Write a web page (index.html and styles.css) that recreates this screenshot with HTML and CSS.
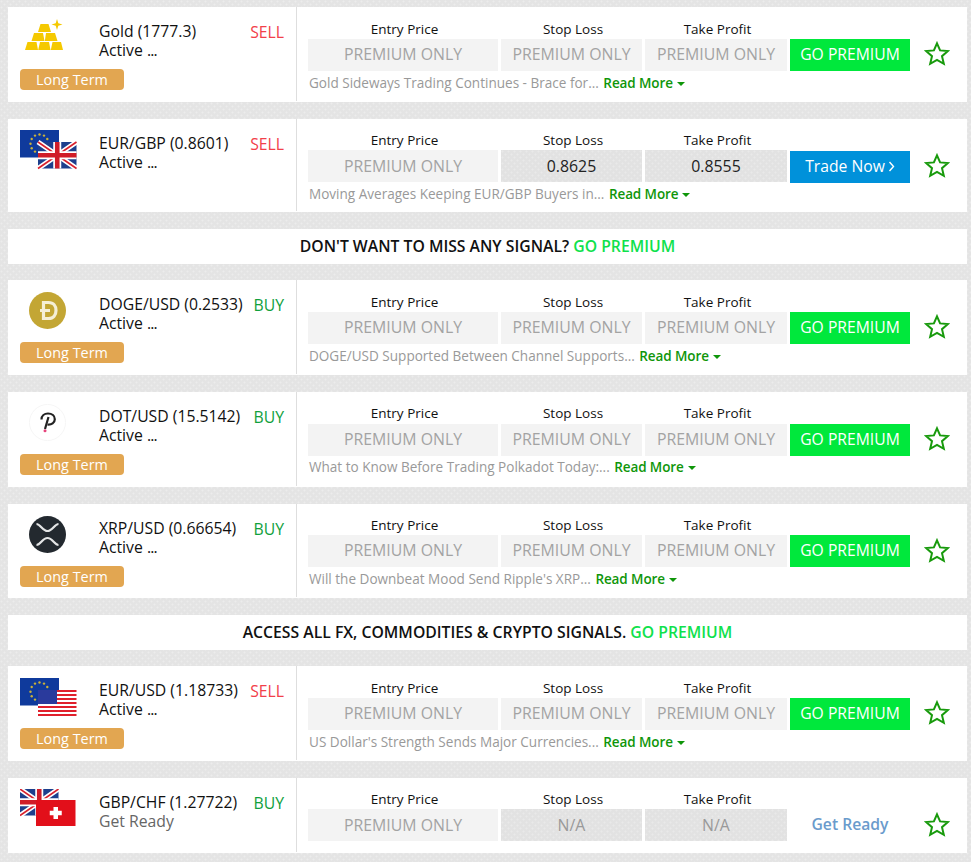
FILE: index.html
```html
<!DOCTYPE html>
<html lang="en">
<head>
<meta charset="utf-8">
<title>Signals</title>
<link rel="stylesheet" href="styles.css">
</head>
<body>
<svg class="defs" width="0" height="0" aria-hidden="true">
  <defs>
    <g id="eu">
      <rect width="39" height="27.5" fill="#0f3a9c"/>
      <g fill="#c9b13a">
        <circle cx="19.5" cy="4.5" r="1.2"/><circle cx="24" cy="5.6" r="1.2"/><circle cx="27.3" cy="9" r="1.2"/><circle cx="28.5" cy="13.7" r="1.2"/><circle cx="27.3" cy="18.2" r="1.2"/><circle cx="24" cy="21.6" r="1.2"/><circle cx="19.5" cy="22.8" r="1.2"/><circle cx="15" cy="21.6" r="1.2"/><circle cx="11.7" cy="18.2" r="1.2"/><circle cx="10.5" cy="13.7" r="1.2"/><circle cx="11.7" cy="9" r="1.2"/><circle cx="15" cy="5.6" r="1.2"/>
      </g>
    </g>
    <g id="uk">
      <rect width="38.5" height="26.5" fill="#1d3f8c"/>
      <path d="M0 0L38.5 26.5M38.5 0L0 26.5" stroke="#fff" stroke-width="5"/>
      <path d="M0 0L38.5 26.5M38.5 0L0 26.5" stroke="#d8202c" stroke-width="1.6"/>
      <path d="M19.25 0V26.5M0 13.25H38.5" stroke="#fff" stroke-width="8"/>
      <path d="M19.25 0V26.5M0 13.25H38.5" stroke="#d01c28" stroke-width="4.6"/>
    </g>
    <symbol id="star" viewBox="0 0 26 25">
      <path d="M13 2.3L16.1 9.4L23.9 10.1L18 15.2L19.8 22.8L13 18.8L6.2 22.8L8 15.2L2.1 10.1L9.9 9.4Z" fill="#fff" stroke="#189a0c" stroke-width="2" stroke-linejoin="miter"/>
    </symbol>
  </defs>
</svg>

<main class="list">

  <article class="row row-lt">
    <div class="left">
      <div class="left-top">
        <div class="logo">
          <svg class="gold" width="39" height="32" viewBox="0 0 39 32">
            <path d="M32 0L33.300 4.200L37.500 5.500L33.300 6.800L32 11L30.700 6.800L26.500 5.500L30.700 4.200Z" fill="#f5c900"/>
            <g fill="#f5c900">
              <path d="M15.500 5H23.500L26 13H13Z"/>
              <path d="M9 14H18L19.500 22H6.500Z"/>
              <path d="M21 14H30L32.500 22H19.800Z"/>
              <path d="M2.500 23H11.500L13 31H0Z"/>
              <path d="M15 23H24L25.500 31H13.200Z"/>
              <path d="M27.500 23H36L38 31H25.800Z"/>
            </g>
          </svg>
        </div>
        <div class="info"><div class="name">Gold (1777.3)</div><div class="status">Active <span class="dots">...</span></div></div>
        <div class="signal sell">SELL</div>
      </div>
      <div class="badge">Long Term</div>
    </div>
    <div class="main">
      <div class="cells">
        <div class="cell cell-entry"><div class="label">Entry Price</div><div class="val val-locked">PREMIUM ONLY</div></div>
        <div class="cell cell-sl"><div class="label">Stop Loss</div><div class="val val-locked">PREMIUM ONLY</div></div>
        <div class="cell cell-tp"><div class="label">Take Profit</div><div class="val val-locked">PREMIUM ONLY</div></div>
        <a class="btn btn-premium">GO PREMIUM</a>
      </div>
      <p class="news">Gold Sideways Trading Continues - Brace for... <a class="more">Read More<i class="caret"></i></a></p>
    </div>
    <svg class="star"><use href="#star"/></svg>
  </article>

  <article class="row row-plain">
    <div class="left">
      <div class="left-top">
        <div class="logo">
          <svg class="flags" width="57" height="40" viewBox="0 0 57 40"><use href="#eu"/><use href="#uk" x="18" y="12"/></svg>
        </div>
        <div class="info"><div class="name">EUR/GBP (0.8601)</div><div class="status">Active <span class="dots">...</span></div></div>
        <div class="signal sell">SELL</div>
      </div>
    </div>
    <div class="main">
      <div class="cells">
        <div class="cell cell-entry"><div class="label">Entry Price</div><div class="val val-locked">PREMIUM ONLY</div></div>
        <div class="cell cell-sl"><div class="label">Stop Loss</div><div class="val val-open">0.8625</div></div>
        <div class="cell cell-tp"><div class="label">Take Profit</div><div class="val val-open">0.8555</div></div>
        <a class="btn btn-trade">Trade Now<svg class="chev" width="7" height="11" viewBox="0 0 7 11"><path d="M1.500 1L5.500 5.500L1.500 10" fill="none" stroke="#fff" stroke-width="1.400"/></svg></a>
      </div>
      <p class="news">Moving Averages Keeping EUR/GBP Buyers in... <a class="more">Read More<i class="caret"></i></a></p>
    </div>
    <svg class="star"><use href="#star"/></svg>
  </article>

  <div class="banner">DON'T WANT TO MISS ANY SIGNAL? <a class="banner-link">GO PREMIUM</a></div>

  <article class="row row-lt">
    <div class="left">
      <div class="left-top">
        <div class="logo">
          <svg class="coin" width="37" height="37" viewBox="0 0 37 37">
            <circle cx="18.500" cy="18.500" r="18.500" fill="#c3a634"/>
            <path d="M14.500 10.500H19.500C24.500 10.500 27 14 27 18.500C27 23 24.500 26.500 19.500 26.500H14.500ZM11 18.500H21" fill="none" stroke="#f5efd6" stroke-width="3.200"/>
          </svg>
        </div>
        <div class="info"><div class="name">DOGE/USD (0.2533)</div><div class="status">Active <span class="dots">...</span></div></div>
        <div class="signal buy">BUY</div>
      </div>
      <div class="badge">Long Term</div>
    </div>
    <div class="main">
      <div class="cells">
        <div class="cell cell-entry"><div class="label">Entry Price</div><div class="val val-locked">PREMIUM ONLY</div></div>
        <div class="cell cell-sl"><div class="label">Stop Loss</div><div class="val val-locked">PREMIUM ONLY</div></div>
        <div class="cell cell-tp"><div class="label">Take Profit</div><div class="val val-locked">PREMIUM ONLY</div></div>
        <a class="btn btn-premium">GO PREMIUM</a>
      </div>
      <p class="news">DOGE/USD Supported Between Channel Supports... <a class="more">Read More<i class="caret"></i></a></p>
    </div>
    <svg class="star"><use href="#star"/></svg>
  </article>

  <article class="row row-lt">
    <div class="left">
      <div class="left-top">
        <div class="logo">
          <svg class="coin" width="37" height="37" viewBox="0 0 37 37">
            <circle cx="18.500" cy="18.500" r="18" fill="#fff" stroke="#f6f6f6"/>
            <path d="M19.500 13L16 25" fill="none" stroke="#222" stroke-width="2.200"/>
            <path d="M12.500 15.500C12.500 11.500 15.500 9.500 19 9.500C23 9.500 25.800 11.800 25.800 15.200C25.800 18.800 22.500 21 18.500 20.500" fill="none" stroke="#222" stroke-width="2.200"/>
            <circle cx="16" cy="26.800" r="1.500" fill="#e6447c"/>
          </svg>
        </div>
        <div class="info"><div class="name">DOT/USD (15.5142)</div><div class="status">Active <span class="dots">...</span></div></div>
        <div class="signal buy">BUY</div>
      </div>
      <div class="badge">Long Term</div>
    </div>
    <div class="main">
      <div class="cells">
        <div class="cell cell-entry"><div class="label">Entry Price</div><div class="val val-locked">PREMIUM ONLY</div></div>
        <div class="cell cell-sl"><div class="label">Stop Loss</div><div class="val val-locked">PREMIUM ONLY</div></div>
        <div class="cell cell-tp"><div class="label">Take Profit</div><div class="val val-locked">PREMIUM ONLY</div></div>
        <a class="btn btn-premium">GO PREMIUM</a>
      </div>
      <p class="news">What to Know Before Trading Polkadot Today:... <a class="more">Read More<i class="caret"></i></a></p>
    </div>
    <svg class="star"><use href="#star"/></svg>
  </article>

  <article class="row row-lt">
    <div class="left">
      <div class="left-top">
        <div class="logo">
          <svg class="coin" width="37" height="37" viewBox="0 0 37 37">
            <circle cx="18.500" cy="18.500" r="18.500" fill="#23292f"/>
            <path d="M7.500 8C11.500 8 13.500 15 18.500 15C23.500 15 25.500 8 29.500 8M7.500 29C11.500 29 13.500 22 18.500 22C23.500 22 25.500 29 29.500 29" fill="none" stroke="#e4e5e6" stroke-width="2.200"/>
          </svg>
        </div>
        <div class="info"><div class="name">XRP/USD (0.66654)</div><div class="status">Active <span class="dots">...</span></div></div>
        <div class="signal buy">BUY</div>
      </div>
      <div class="badge">Long Term</div>
    </div>
    <div class="main">
      <div class="cells">
        <div class="cell cell-entry"><div class="label">Entry Price</div><div class="val val-locked">PREMIUM ONLY</div></div>
        <div class="cell cell-sl"><div class="label">Stop Loss</div><div class="val val-locked">PREMIUM ONLY</div></div>
        <div class="cell cell-tp"><div class="label">Take Profit</div><div class="val val-locked">PREMIUM ONLY</div></div>
        <a class="btn btn-premium">GO PREMIUM</a>
      </div>
      <p class="news">Will the Downbeat Mood Send Ripple's XRP... <a class="more">Read More<i class="caret"></i></a></p>
    </div>
    <svg class="star"><use href="#star"/></svg>
  </article>

  <div class="banner">ACCESS ALL FX, COMMODITIES &amp; CRYPTO SIGNALS. <a class="banner-link">GO PREMIUM</a></div>

  <article class="row row-lt">
    <div class="left">
      <div class="left-top">
        <div class="logo">
          <svg class="flags" width="57" height="40" viewBox="0 0 57 40">
            <use href="#eu"/>
            <g transform="translate(18 12)">
              <rect width="38.500" height="26.500" fill="#fff"/>
              <path d="M0 1H38.500M0 5H38.500M0 9H38.500M0 13H38.500M0 17H38.500M0 21H38.500M0 25H38.500" stroke="#e0202c" stroke-width="2"/>
              <rect width="19" height="14" fill="#2a3a9c"/>
            </g>
          </svg>
        </div>
        <div class="info"><div class="name">EUR/USD (1.18733)</div><div class="status">Active <span class="dots">...</span></div></div>
        <div class="signal sell">SELL</div>
      </div>
      <div class="badge">Long Term</div>
    </div>
    <div class="main">
      <div class="cells">
        <div class="cell cell-entry"><div class="label">Entry Price</div><div class="val val-locked">PREMIUM ONLY</div></div>
        <div class="cell cell-sl"><div class="label">Stop Loss</div><div class="val val-locked">PREMIUM ONLY</div></div>
        <div class="cell cell-tp"><div class="label">Take Profit</div><div class="val val-locked">PREMIUM ONLY</div></div>
        <a class="btn btn-premium">GO PREMIUM</a>
      </div>
      <p class="news">US Dollar's Strength Sends Major Currencies... <a class="more">Read More<i class="caret"></i></a></p>
    </div>
    <svg class="star"><use href="#star"/></svg>
  </article>

  <article class="row row-short">
    <div class="left">
      <div class="left-top">
        <div class="logo">
          <svg class="flags" width="57" height="40" viewBox="0 0 57 40">
            <use href="#uk"/>
            <g transform="translate(16 11)">
              <rect width="39.500" height="26" fill="#e20f1a"/>
              <path d="M19.750 7V19M13.750 13H25.750" stroke="#fff" stroke-width="4.500"/>
            </g>
          </svg>
        </div>
        <div class="info"><div class="name">GBP/CHF (1.27722)</div><div class="status status-wait">Get Ready</div></div>
        <div class="signal buy">BUY</div>
      </div>
    </div>
    <div class="main">
      <div class="cells">
        <div class="cell cell-entry"><div class="label">Entry Price</div><div class="val val-locked">PREMIUM ONLY</div></div>
        <div class="cell cell-sl"><div class="label">Stop Loss</div><div class="val val-na">N/A</div></div>
        <div class="cell cell-tp"><div class="label">Take Profit</div><div class="val val-na">N/A</div></div>
        <a class="btn btn-ready">Get Ready</a>
      </div>
    </div>
    <svg class="star"><use href="#star"/></svg>
  </article>

</main>
</body>
</html>
```

FILE: styles.css
```css
* { box-sizing: border-box; }

html, body { margin: 0; }

body {
  min-height: 862px;
  overflow: hidden;
  padding: 7.3px 4px 0 8px;
  background-color: #e4e4e4;
  background-image:
    radial-gradient(circle at 1.5px 1.5px, #ececec 0.8px, transparent 1.2px),
    radial-gradient(circle at 4.5px 4.5px, #ececec 0.8px, transparent 1.2px);
  background-size: 6px 6px;
  font-family: "Open Sans", "Liberation Sans", sans-serif;
  color: #111;
}

.defs { position: absolute; }

.list {
  display: flex;
  flex-direction: column;
  gap: 17px;
}

.row {
  display: flex;
  background: #fff;
}
.row-lt { height: 94.75px; }
.row-plain { height: 93px; }
.row-short { height: 75px; }

.left {
  flex: none;
  width: 289px;
  padding: 14px 12px 0 12px;
  border-right: 1px solid #dedede;
  margin-bottom: 1px;
}

.left-top {
  display: flex;
  height: 48px;
}

.logo {
  flex: none;
  width: 79px;
  display: flex;
  justify-content: flex-start;
  align-items: flex-start;
}
.flags { margin-top: -3px; }
.row-lt .flags { margin-top: -2px; }
.gold { margin: -2px 0 0 5px; }
.coin { margin: -2px 0 0 9px; }

.info { flex: 1; min-width: 0; }
.name {
  font-size: 15.75px;
  line-height: 20px;
  white-space: nowrap;
}
.status {
  font-size: 15.75px;
  line-height: 18px;
}
.status-wait { color: #666; }
.dots { letter-spacing: -0.8px; }

.signal {
  flex: none;
  font-size: 15.75px;
  line-height: 20px;
  padding-top: 1px;
}
.sell { color: #f2404a; }
.buy { color: #11a03c; }

.badge {
  width: 104px;
  height: 21px;
  border-radius: 4px;
  background: #e2a651;
  color: #fff;
  font-size: 14.4px;
  line-height: 21px;
  text-align: center;
}

.main {
  flex: none;
  width: 614px;
  padding: 12px 0 0 11px;
}
.row-lt .main { padding-top: 12.6px; }

.cells {
  display: flex;
  align-items: flex-end;
  gap: 3px;
}
.cell { flex: none; }
.cell-entry { width: 190px; }
.cell-sl { width: 141px; }
.cell-tp { width: 142px; }

.label {
  margin-bottom: 1.2px;
  padding-left: 3px;
  font-size: 13.5px;
  line-height: 18px;
  text-align: center;
  color: #111;
}

.val {
  height: 32px;
  font-size: 15.85px;
  line-height: 30px;
  text-align: center;
}
.row-plain .val, .row-short .val { line-height: 32px; }
.val-locked { background: #f3f3f3; color: #a3a3a3; }
.val-open, .val-na {
  background-color: #e2e2e2;
  background-image:
    radial-gradient(circle at 1.5px 1.5px, #e9e9e9 0.8px, transparent 1.2px),
    radial-gradient(circle at 4.5px 4.5px, #e9e9e9 0.8px, transparent 1.2px);
  background-size: 6px 6px;
}
.val-open { color: #222; }
.val-na { color: #999; }

.btn {
  flex: none;
  width: 120px;
  height: 32px;
  font-size: 15.7px;
  line-height: 30px;
  text-align: center;
  color: #fff;
}
.btn-premium { background: #00e83c; }
.btn-trade { background: #0091da; margin-bottom: -1px; }
.btn-ready { color: #6a9bcc; font-weight: 600; }
.chev { margin-left: 3px; }

.news {
  margin: 1.8px 0 0;
  padding-left: 1px;
  font-size: 13.55px;
  line-height: 20px;
  color: #999;
}

.more {
  margin-left: 1px;
  font-size: 13.5px;
  color: #0f960a;
  font-weight: 600;
  letter-spacing: -0.1px;
}

.caret {
  display: inline-block;
  margin-left: 4px;
  vertical-align: 2px;
  border-style: solid;
  border-width: 4px 4px 0;
  border-color: #0f960a transparent transparent;
}

.star {
  flex: none;
  width: 26px;
  height: 25px;
  margin: 34px 0 0 13px;
}

.banner {
  height: 35px;
  margin-bottom: -1px;
  background: #fff;
  font-size: 15.75px;
  font-weight: 600;
  line-height: 34px;
  text-align: center;
  color: #111;
}
.banner-link { color: #0fe14c; }
```
